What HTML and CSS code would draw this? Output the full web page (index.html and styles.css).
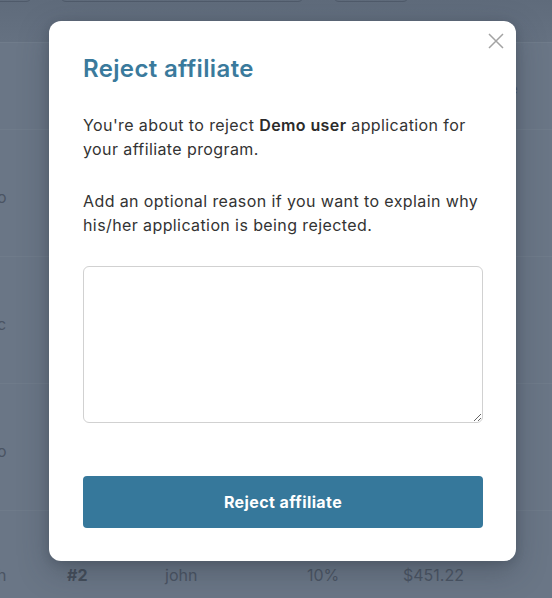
FILE: index.html
```html
<!DOCTYPE html>
<html>
<head>
<meta charset="utf-8">
<link rel="stylesheet" href="styles.css">
</head>
<body>
<div class="page">
  <div class="toolbar">
    <span class="tb-btn tb-a"></span>
    <span class="tb-btn tb-b"></span>
    <span class="tb-btn tb-c"></span>
  </div>
  <div class="row head"><span class="cell c0"></span><span class="cell cend">e</span></div>
  <div class="row"><span class="cell c0">o</span></div>
  <div class="row"><span class="cell c0">c</span></div>
  <div class="row"><span class="cell c0">o</span></div>
  <div class="row last">
    <span class="cell c0">h</span>
    <span class="cell c1">#2</span>
    <span class="cell c2">john</span>
    <span class="cell c3">10%</span>
    <span class="cell c4">$451.22</span>
  </div>
</div>

<div class="overlay">
  <div class="modal">
    <button class="close" aria-label="Close">
      <svg width="16" height="16" viewBox="0 0 16 16"><path d="M1 1L15 15M15 1L1 15" stroke="#a3a3a3" stroke-width="1.5" fill="none"/></svg>
    </button>
    <h2 class="title">Reject affiliate</h2>
    <p class="text">You're about to reject <strong>Demo user</strong> application for your affiliate program.</p>
    <p class="text">Add an optional reason if you want to explain why his/her application is being rejected.</p>
    <textarea class="reason"></textarea>
    <button class="submit">Reject affiliate</button>
  </div>
</div>
</body>
</html>
```

FILE: styles.css
```css
* { box-sizing: border-box; }
html, body { margin: 0; padding: 0; }
body {
  width: 552px;
  height: 598px;
  overflow: hidden;
  background: #6a7686;
  font-family: Inter, "Noto Sans", "Liberation Sans", sans-serif;
  position: relative;
}
.page { width: 552px; height: 598px; overflow: hidden; }
.toolbar {
  height: 43px;
  background: linear-gradient(#5f6b7b, #657181);
  display: flex;
  align-items: flex-start;
  border-bottom: 1px solid #707c8b;
}
.tb-btn {
  display: block;
  height: 20px;
  margin-top: -18px;
  border: 1px solid #4f5a6a;
  border-radius: 6px;
}
.tb-a { width: 40px; margin-left: -8px; }
.tb-b { width: 244px; margin-left: 28px; }
.tb-c { width: 76px; margin-left: 29px; }
.row {
  height: 127px;
  display: flex;
  align-items: center;
  padding-top: 7px;
  border-bottom: 1px solid #6f7b8a;
  color: #4a5463;
  font-size: 16px;
}
.row.head { height: 87px; align-items: flex-start; padding-top: 38px; }
.cell { display: block; white-space: nowrap; }
.c0 { width: 10px; margin-left: -3px; }
.cend { margin-left: 503px; font-size: 13px; }
.row.last { height: 90px; align-items: flex-start; padding-top: 54px; }
.c1 { margin-left: 60px; width: 98px; font-weight: 700; color: #444d5a; }
.c2 { width: 142px; }
.c3 { width: 96px; }

.overlay {
  position: absolute;
  inset: 0;
  padding: 21px 0 0 49px;
}
.modal {
  position: relative;
  width: 467px;
  height: 540px;
  background: #fff;
  border-radius: 12px;
  padding: 32px 33px 0 34px;
  box-shadow: 0 10px 30px rgba(40, 48, 60, 0.35), 0 2px 8px rgba(40,48,60,0.2);
  display: flex;
  flex-direction: column;
}
.close {
  position: absolute;
  top: 12px;
  right: 12px;
  width: 16px;
  height: 16px;
  padding: 0;
  border: 0;
  background: none;
  display: block;
}
.close svg { display: block; }
.title {
  margin: 0 0 28px;
  font-size: 24px;
  line-height: 32px;
  font-weight: 600;
  color: #3a7a9c;
  letter-spacing: 0.35px;
}
.text {
  margin: 0 0 28px;
  font-size: 16px;
  line-height: 24px;
  color: #333;
  letter-spacing: 0.4px;
}
.text strong { font-weight: 600; color: #2b2b2b; }
.reason {
  display: block;
  width: 400px;
  height: 157px;
  margin: 1px 0 0;
  border: 1px solid #d1d1d1;
  border-radius: 6px;
  resize: vertical;
  font-family: inherit;
}
.submit {
  display: block;
  width: 400px;
  height: 52px;
  margin-top: 53px;
  border: 0;
  border-radius: 4px;
  background: #36789b;
  color: #fff;
  font-family: inherit;
  font-size: 16px;
  font-weight: 700;
  letter-spacing: 0.4px;
}
```
